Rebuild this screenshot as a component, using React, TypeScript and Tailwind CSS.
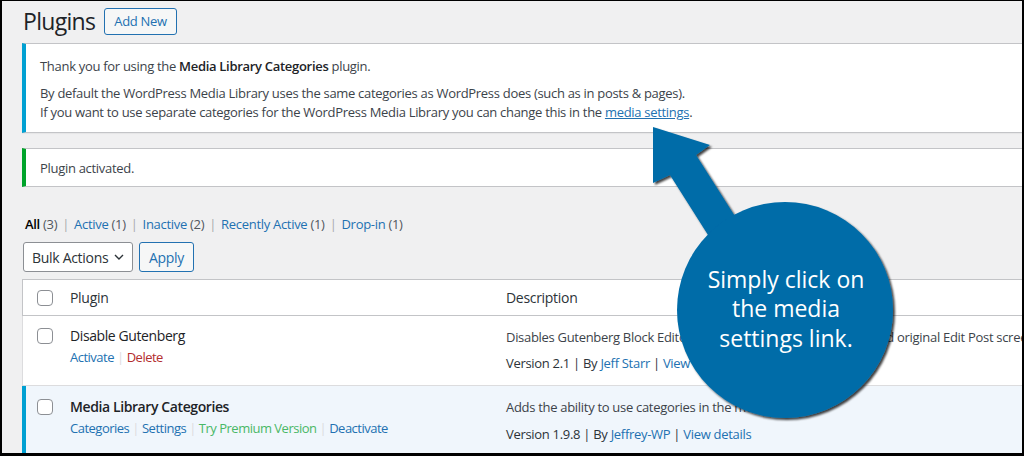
import React from 'react'

function Checkbox() {
  return <span className="block h-4 w-4 rounded-[4px] border border-[#8c8f94] bg-white" />
}

function Sep({ light }: { light?: boolean }) {
  return <span className={light ? 'px-[3px] text-[#dcdcde]' : 'px-[5px] text-[#a7aaad]'}>|</span>
}

function Callout() {
  return (
    <svg
      className="pointer-events-none absolute left-[-2px] top-[-1px]"
      width="1024"
      height="456"
      viewBox="0 0 1024 456"
    >
      <defs>
        <filter id="sh" x="-20%" y="-20%" width="140%" height="140%">
          <feDropShadow dx="2" dy="2" stdDeviation="1.2" floodColor="#000" floodOpacity="0.75" />
        </filter>
      </defs>
      <g filter="url(#sh)" fill="#006ca8">
        <polygon points="653,127 710,145 696,155 745,232 715,246 670,175 653,183" />
        <circle cx="785" cy="310" r="108" />
      </g>
      <g fill="#ffffff" fontFamily="'Open Sans', sans-serif" fontSize="23" textAnchor="middle" letterSpacing="0">
        <text x="786" y="288">Simply click on</text>
        <text x="786" y="317">the media</text>
        <text x="786" y="347">settings link.</text>
      </g>
    </svg>
  )
}

export default function App() {
  return (
    <div className="h-[456px] w-[1024px] overflow-hidden bg-black">
      <div className="relative ml-[2px] mt-px h-[452px] w-[1020px] overflow-hidden bg-[#f0f0f1] font-['Open_Sans',sans-serif] text-[13px] tracking-[-0.3px] text-[#3c434a]">
        <div className="w-[1100px] pl-[20px]">
          {/* title */}
          <div className="mt-[7px] flex items-center">
            <h1 className="ml-px text-[23px] leading-[27px] tracking-[-0.7px] text-[#1d2327]">Plugins</h1>
            <span className="ml-[9px] flex h-[27px] items-center rounded-[3px] border border-[#2271b1] bg-[#f6f7f7] px-[9px] font-medium text-[#2271b1]">
              Add New
            </span>
          </div>

          {/* info notice */}
          <div className="mt-[8px] border border-l-4 border-[#c3c4c7] border-l-[#00a0d2] bg-white pb-[10px] pl-[14px] pt-[12px] shadow-[0_1px_1px_rgba(0,0,0,0.04)]">
            <p className="leading-[20px]">
              Thank you for using the <span className="font-semibold text-[#1d2327]">Media Library Categories</span> plugin.
            </p>
            <p className="mt-[8px] leading-[19px]">
              By default the WordPress Media Library uses the same categories as WordPress does (such as in posts &amp; pages).
            </p>
            <p className="leading-[19px]">
              If you want to use separate categories for the WordPress Media Library you can change this in the{' '}
              <span className="text-[#2271b1] underline">media settings</span>.
            </p>
          </div>

          {/* success notice */}
          <div className="mt-[15px] border border-l-4 border-[#c3c4c7] border-l-[#00a32a] bg-white pb-[8px] pl-[14px] pt-[9px]">
            <p className="leading-[20px]">Plugin activated.</p>
          </div>

          {/* filter links */}
          <div className="mt-[27px] flex pl-[3px] leading-[20px] text-[#50575e]">
            <span><span className="font-semibold text-[#000]">All</span> (3)</span>
            <Sep />
            <span><span className="text-[#2271b1]">Active</span> (1)</span>
            <Sep />
            <span><span className="text-[#2271b1]">Inactive</span> (2)</span>
            <Sep />
            <span><span className="text-[#2271b1]">Recently Active</span> (1)</span>
            <Sep />
            <span><span className="text-[#2271b1]">Drop-in</span> (1)</span>
          </div>

          {/* bulk actions */}
          <div className="mt-[8px] flex gap-[6px] pl-px">
            <div className="flex h-[30px] w-[110px] items-center justify-between rounded-[3px] border border-[#8c8f94] bg-white pl-[8px] pr-[7px] text-[14px] text-[#2c3338]">
              <span>Bulk Actions</span>
              <svg width="12" height="12" viewBox="0 0 12 12" fill="none" stroke="#2c3338" strokeWidth="1.4">
                <path d="M2 4l4 4 4-4" />
              </svg>
            </div>
            <div className="flex h-[30px] w-[55px] items-center justify-center rounded-[3px] border border-[#2271b1] bg-[#f6f7f7] text-[14px] text-[#2271b1]">
              Apply
            </div>
          </div>

          {/* table */}
          <div className="mt-[7px] border-t border-[#c3c4c7] bg-white">
            <div className="grid h-[36px] grid-cols-[37px_436px_1fr] items-center border-b border-l border-[#c3c4c7] text-[14px] text-[#2c3338]">
              <div className="pl-[14px]"><Checkbox /></div>
              <div className="pl-[10px]">Plugin</div>
              <div className="pl-[10px]">Description</div>
            </div>

            <div className="grid h-[70px] grid-cols-[37px_436px_1fr] border-b border-l border-[#dcdcde]">
              <div className="pl-[14px] pt-[12px]"><Checkbox /></div>
              <div className="pl-[10px] pt-[10px]">
                <div className="text-[14px] leading-[20px] tracking-[-0.4px] text-[#1d2327]">Disable Gutenberg</div>
                <div className="mt-px flex leading-[20px] tracking-[-0.5px]">
                  <span className="text-[#2271b1]">Activate</span>
                  <Sep light />
                  <span className="text-[#b32d2e]">Delete</span>
                </div>
              </div>
              <div className="whitespace-nowrap pl-[10px] pt-[11px]">
                <div className="leading-[20px]">
                  Disables Gutenberg Block Editor and restores the Classic Editor and original Edit Post screen (TinyMCE, Meta Boxes, et al.).
                </div>
                <div className="mt-[6px] leading-[20px] text-[#2c3338]">
                  Version 2.1 | By <span className="text-[#2271b1]">Jeff Starr</span> | <span className="text-[#2271b1]">View details</span>
                </div>
              </div>
            </div>

            <div className="grid h-[80px] grid-cols-[34px_436px_1fr] border-l-4 border-l-[#00a0d2] bg-[#f0f6fc]">
              <div className="pl-[11px] pt-[13px]"><Checkbox /></div>
              <div className="pl-[10px] pt-[11px]">
                <div className="text-[14px] font-semibold leading-[20px] tracking-[-0.4px] text-[#1d2327]">Media Library Categories</div>
                <div className="mt-px flex leading-[20px] tracking-[-0.5px]">
                  <span className="text-[#2271b1]">Categories</span>
                  <Sep light />
                  <span className="text-[#2271b1]">Settings</span>
                  <Sep light />
                  <span className="text-[#4ab866]">Try Premium Version</span>
                  <Sep light />
                  <span className="text-[#2271b1]">Deactivate</span>
                </div>
              </div>
              <div className="whitespace-nowrap pl-[10px] pt-[11px]">
                <div className="leading-[20px]">Adds the ability to use categories in the media library.</div>
                <div className="mt-[7px] leading-[20px] text-[#2c3338]">
                  Version 1.9.8 | By <span className="text-[#2271b1]">Jeffrey-WP</span> | <span className="text-[#2271b1]">View details</span>
                </div>
              </div>
            </div>
          </div>
        </div>

        <Callout />
      </div>
    </div>
  )
}
